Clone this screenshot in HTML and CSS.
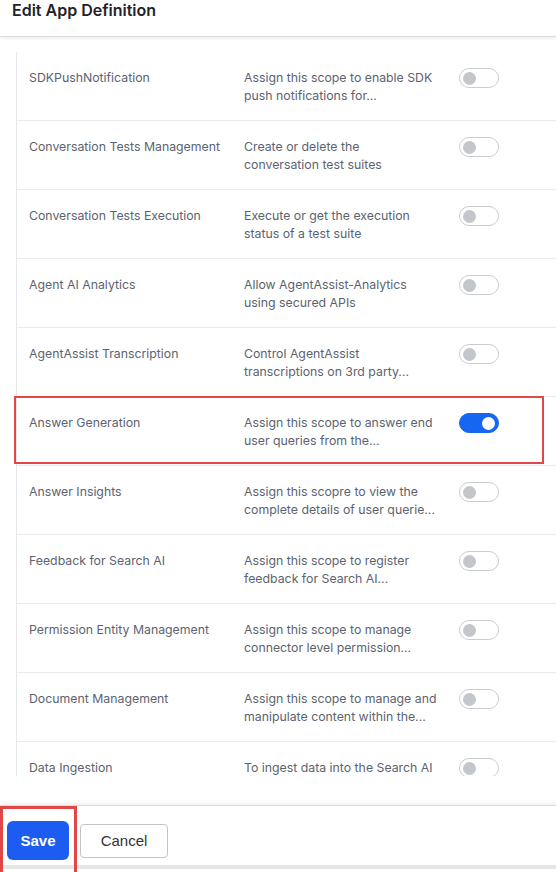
FILE: index.html
```html
<!DOCTYPE html>
<html lang="en">
<head>
<meta charset="utf-8">
<title>Edit App Definition</title>
<link rel="stylesheet" href="styles.css">
</head>
<body>
<div class="dialog">
  <header class="dlg-header">
    <h1 class="dlg-title">Edit App Definition</h1>
  </header>
  <main class="dlg-body">
    <div class="scope-list">
      <div class="scope-row">
        <div class="scope-name">SDKPushNotification</div>
        <div class="scope-desc">Assign this scope to enable SDK<br>push notifications for...</div>
        <div class="toggle"><span class="knob"></span></div>
      </div>
      <div class="scope-row">
        <div class="scope-name">Conversation Tests Management</div>
        <div class="scope-desc">Create or delete the<br>conversation test suites</div>
        <div class="toggle"><span class="knob"></span></div>
      </div>
      <div class="scope-row">
        <div class="scope-name">Conversation Tests Execution</div>
        <div class="scope-desc">Execute or get the execution<br>status of a test suite</div>
        <div class="toggle"><span class="knob"></span></div>
      </div>
      <div class="scope-row">
        <div class="scope-name">Agent AI Analytics</div>
        <div class="scope-desc">Allow AgentAssist-Analytics<br>using secured APIs</div>
        <div class="toggle"><span class="knob"></span></div>
      </div>
      <div class="scope-row">
        <div class="scope-name">AgentAssist Transcription</div>
        <div class="scope-desc">Control AgentAssist<br>transcriptions on 3rd party...</div>
        <div class="toggle"><span class="knob"></span></div>
      </div>
      <div class="scope-row highlighted">
        <div class="scope-name">Answer Generation</div>
        <div class="scope-desc">Assign this scope to answer end<br>user queries from the...</div>
        <div class="toggle on"><span class="knob"></span></div>
        <span class="callout row-callout"></span>
      </div>
      <div class="scope-row">
        <div class="scope-name">Answer Insights</div>
        <div class="scope-desc">Assign this scopre to view the<br>complete details of user querie...</div>
        <div class="toggle"><span class="knob"></span></div>
      </div>
      <div class="scope-row">
        <div class="scope-name">Feedback for Search AI</div>
        <div class="scope-desc">Assign this scope to register<br>feedback for Search AI...</div>
        <div class="toggle"><span class="knob"></span></div>
      </div>
      <div class="scope-row">
        <div class="scope-name">Permission Entity Management</div>
        <div class="scope-desc">Assign this scope to manage<br>connector level permission...</div>
        <div class="toggle"><span class="knob"></span></div>
      </div>
      <div class="scope-row">
        <div class="scope-name">Document Management</div>
        <div class="scope-desc">Assign this scope to manage and<br>manipulate content within the...</div>
        <div class="toggle"><span class="knob"></span></div>
      </div>
      <div class="scope-row">
        <div class="scope-name">Data Ingestion</div>
        <div class="scope-desc">To ingest data into the Search AI</div>
        <div class="toggle"><span class="knob"></span></div>
      </div>
    </div>
  </main>
  <footer class="dlg-footer">
    <div class="save-wrap">
      <button class="btn btn-primary" type="button">Save</button>
      <span class="callout save-callout"></span>
    </div>
    <button class="btn btn-secondary" type="button">Cancel</button>
  </footer>
</div>
</body>
</html>
```

FILE: styles.css
```css
* {
  box-sizing: border-box;
}

html, body {
  margin: 0;
  padding: 0;
  background: #ffffff;
}

body {
  width: 556px;
  height: 872px;
  overflow: hidden;
  font-family: Inter, "Noto Sans", "Liberation Sans", sans-serif;
}

.dialog {
  display: flex;
  flex-direction: column;
  height: 872px;
}

.dlg-header {
  height: 37px;
  flex: none;
  padding-left: 12px;
  border-bottom: 1px solid #dcdcdc;
  box-shadow: 0 2px 3px rgba(0, 0, 0, 0.06);
  position: relative;
  z-index: 1;
}

.dlg-title {
  margin: 0;
  font-size: 16px;
  font-weight: 600;
  color: #1f2329;
  line-height: 20px;
}

.dlg-body {
  flex: none;
  height: 739px;
  overflow: hidden;
  padding-top: 15px;
  padding-left: 16px;
}

.scope-list {
  border-left: 1px solid #e6e8eb;
}

.scope-row {
  position: relative;
  display: flex;
  align-items: flex-start;
  height: 69px;
  padding: 17px 0 0 12px;
  border-bottom: 1px solid #e9eaec;
  font-size: 12.3px;
  line-height: 18px;
  color: #5c6370;
}

.scope-name {
  width: 215px;
  flex: none;
  white-space: nowrap;
}

.scope-desc {
  width: 196px;
  flex: none;
  white-space: nowrap;
}

.toggle {
  flex: none;
  margin-left: 19px;
  margin-top: -1px;
  width: 40px;
  height: 20px;
  border-radius: 10px;
  border: 1px solid #c9cdd1;
  background: #ffffff;
  display: flex;
  align-items: center;
  padding: 0 3px;
}

.knob {
  width: 13px;
  height: 13px;
  border-radius: 50%;
  background: #c3c7cb;
}

.toggle.on {
  background: #1766f2;
  border-color: #1766f2;
  justify-content: flex-end;
}

.toggle.on .knob {
  background: #ffffff;
}

.callout {
  position: absolute;
  border: 2px solid #e04848;
  pointer-events: none;
}

.row-callout {
  left: -3px;
  top: -1px;
  width: 530px;
  height: 68px;
}

.dlg-footer {
  margin-top: 29px;
  height: 64px;
  flex: none;
  display: flex;
  align-items: center;
  gap: 11px;
  padding-left: 7px;
  padding-top: 10px;
  border-top: 1px solid #dedede;
  border-bottom: 4px solid #e6e6e6;
  box-shadow: 0 -2px 4px rgba(0, 0, 0, 0.06);
}

.save-wrap {
  position: relative;
}

.save-callout {
  left: -7px;
  top: -15px;
  width: 77px;
  height: 70px;
  border-width: 3px;
}

.btn {
  font-family: "Liberation Sans", Arial, sans-serif;
  font-size: 15px;
  cursor: pointer;
  margin: 0;
}

.btn-primary {
  width: 62px;
  height: 39px;
  border: none;
  border-radius: 6px;
  background: #1d5cf0;
  color: #ffffff;
  font-weight: 700;
}

.btn-secondary {
  width: 88px;
  height: 34px;
  border: 1px solid #c4c4c4;
  border-radius: 4px;
  background: #ffffff;
  color: #333333;
}
```
